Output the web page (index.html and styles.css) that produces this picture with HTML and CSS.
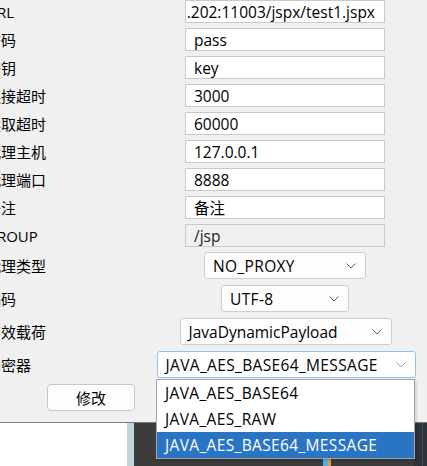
FILE: index.html
```html
<!DOCTYPE html>
<html lang="zh-CN">
<head>
<meta charset="utf-8">
<title>Shell</title>
<link rel="stylesheet" href="styles.css">
</head>
<body>
<div class="screen">
  <div class="dialog">
    <div class="form">
      <div class="row t"><span class="lbl">URL</span><div class="field url"><span>http://192.168.1.202:11003/jspx/test1.jspx</span></div></div>
      <div class="row t"><span class="lbl">密码</span><div class="field">pass</div></div>
      <div class="row t"><span class="lbl">密钥</span><div class="field">key</div></div>
      <div class="row t"><span class="lbl">连接超时</span><div class="field">3000</div></div>
      <div class="row t"><span class="lbl">读取超时</span><div class="field">60000</div></div>
      <div class="row t"><span class="lbl">代理主机</span><div class="field">127.0.0.1</div></div>
      <div class="row t"><span class="lbl">代理端口</span><div class="field">8888</div></div>
      <div class="row t"><span class="lbl">备注</span><div class="field">备注</div></div>
      <div class="row t"><span class="lbl">GROUP</span><div class="field dis">/jsp</div></div>
      <div class="row s"><span class="lbl">代理类型</span><div class="sel w-proxy"><span class="caps">NO_PROXY</span><svg class="chev" width="10" height="6" viewBox="0 0 10 6"><polyline points="0.5,0.5 5,5 9.5,0.5" fill="none" stroke="#606060" stroke-width="1"/></svg></div></div>
      <div class="row s"><span class="lbl">编码</span><div class="sel w-enc"><span class="caps">UTF-8</span><svg class="chev" width="10" height="6" viewBox="0 0 10 6"><polyline points="0.5,0.5 5,5 9.5,0.5" fill="none" stroke="#606060" stroke-width="1"/></svg></div></div>
      <div class="row s"><span class="lbl">有效载荷</span><div class="sel w-pay"><span>JavaDynamicPayload</span><svg class="chev" width="10" height="6" viewBox="0 0 10 6"><polyline points="0.5,0.5 5,5 9.5,0.5" fill="none" stroke="#606060" stroke-width="1"/></svg></div></div>
      <div class="row s"><span class="lbl">加密器</span><div class="sel w-cry focus"><span class="caps">JAVA_AES_BASE64_MESSAGE</span><svg class="chev" width="10" height="6" viewBox="0 0 10 6"><polyline points="0.5,0.5 5,5 9.5,0.5" fill="none" stroke="#a0a0a0" stroke-width="1"/></svg></div></div>
      <div class="btnrow"><button class="btn">修改</button></div>
    </div>
    <ul class="popup">
      <li class="caps">JAVA_AES_BASE64</li>
      <li class="caps">JAVA_AES_RAW</li>
      <li class="caps on">JAVA_AES_BASE64_MESSAGE</li>
    </ul>
  </div>
  <div class="bottom">
    <div class="white"></div>
    <div class="strip"></div>
    <div class="dark"><i class="cy"></i><i class="or"></i></div>
    <div class="right"><i class="dots"></i></div>
  </div>
</div>
</body>
</html>
```

FILE: styles.css
```css
* { box-sizing: border-box; }
html, body { margin: 0; padding: 0; }
body {
  width: 427px;
  height: 466px;
  overflow: hidden;
  font-family: "Open Sans", "Noto Sans CJK SC", sans-serif;
  font-size: 15.5px;
  color: #000;
  background: #3c3c3c;
}
.screen { position: relative; width: 427px; height: 466px; overflow: hidden; }
.dialog {
  position: relative;
  height: 423px;
  background: #f0f0f0;
  border-bottom: 1px solid #7a7a7a;
}
.form {
  display: flex;
  flex-direction: column;
  margin-left: -14px;
  width: 448px;
}
.row {
  display: grid;
  grid-template-columns: 150px 298px;
  align-items: center;
}
.row.t { height: 23px; margin-bottom: 5px; }
.row.s { height: 27px; margin-bottom: 6px; }
.lbl { white-space: nowrap; line-height: 20px; font-size: 15px; }
.field {
  justify-self: center;
  width: 200px;
  height: 23px;
  border: 1px solid #c9c9c9;
  background: #fff;
  display: flex;
  align-items: center;
  padding: 0 8px;
  white-space: nowrap;
  overflow: hidden;
}
.field.url { justify-content: flex-end; padding-right: 9px; }
.field.dis { background: #f0f0f0; color: #222; }
.caps { letter-spacing: 0.35px; }
.sel {
  justify-self: center;
  height: 27px;
  border: 1px solid #cdcdcd;
  border-radius: 3px;
  background: #fdfdfd;
  display: flex;
  align-items: center;
  justify-content: space-between;
  padding: 0 9px 0 8px;
  white-space: nowrap;
}
.sel.focus { border-color: #94c0ec; background: #fff; }
.w-proxy { width: 162px; }
.w-enc { width: 128px; }
.w-pay { width: 212px; margin-left: 1px; }
.w-cry { width: 259px; margin-left: 2px; }
.chev { display: block; flex: none; }
.btnrow { height: 27px; padding-left: 61px; display: flex; }
.btn {
  width: 88px;
  height: 27px;
  border: 1px solid #c6c6c6;
  border-radius: 4px;
  background: #fdfdfd;
  font: inherit;
  font-size: 15px;
  color: #000;
  padding: 0;
}
.popup {
  position: absolute;
  left: 156px;
  top: 379px;
  width: 259px;
  margin: 0;
  padding: 0;
  list-style: none;
  background: #fff;
  border: 1px solid #a3a3a3;
  box-shadow: 2px 2px 2px rgba(0, 0, 0, 0.12);
  z-index: 2;
}
.popup li {
  height: 26px;
  line-height: 26px;
  padding-left: 8px;
  white-space: nowrap;
}
.popup li.on { background: #2a75c3; color: #fff; }
.bottom { display: flex; height: 43px; }
.white { width: 127px; background: #fff; }
.strip { width: 7px; background: #c3d6dd; }
.dark {
  flex: 1;
  background: #3c3c3c;
  display: flex;
  align-items: flex-end;
  padding-left: 189px;
}
.cy { display: block; width: 5px; height: 8px; background: #52b2e6; }
.or { display: block; width: 3px; height: 8px; background: #e39b3c; }
.right { width: 13px; background: #2d323b; display: flex; }
.dots { display: block; margin-left: 8px; border-left: 1px dotted #5a6270; height: 100%; }
```
